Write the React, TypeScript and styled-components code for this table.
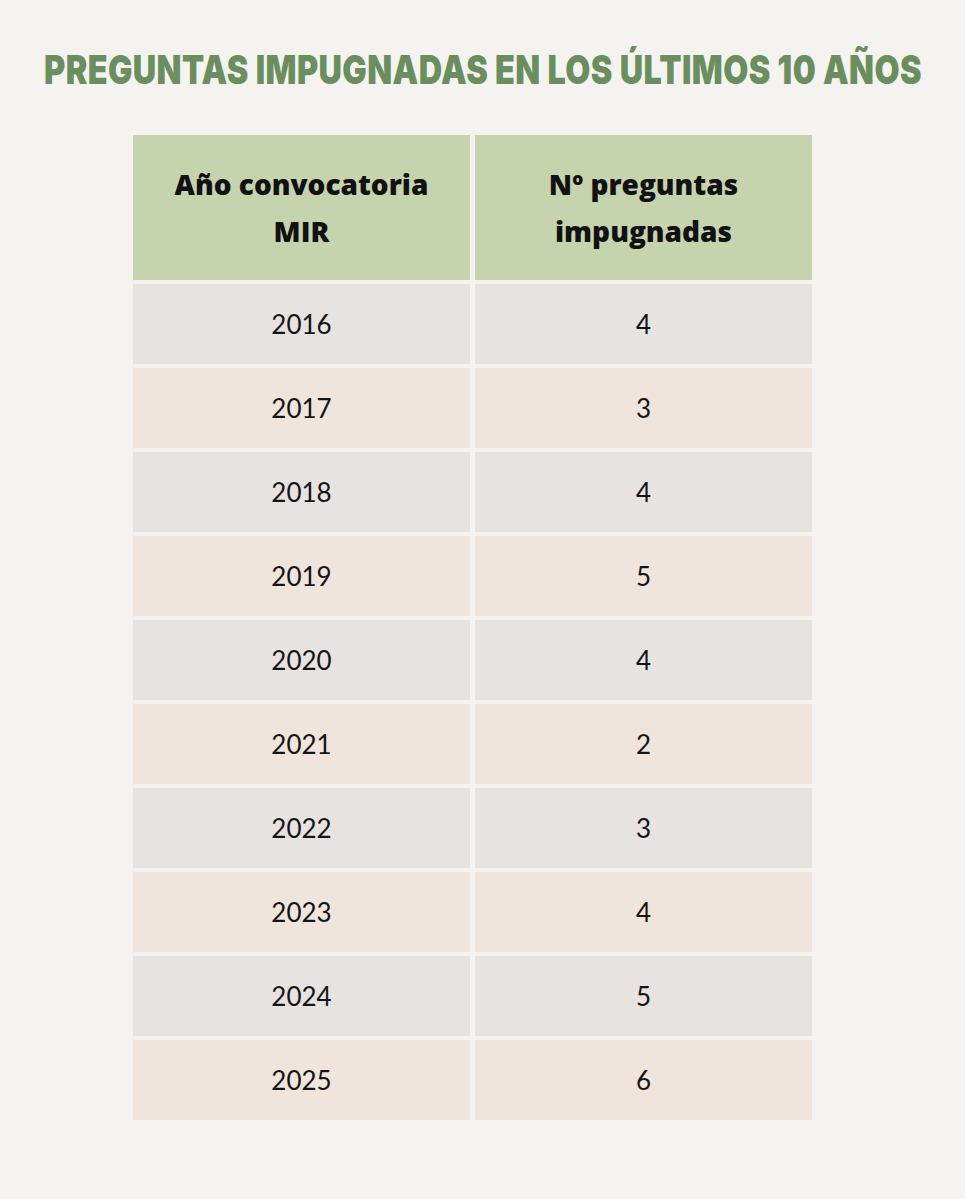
import React from "react";
import styled, { createGlobalStyle } from "styled-components";

const rows = [
  { year: "2016", count: 4 },
  { year: "2017", count: 3 },
  { year: "2018", count: 4 },
  { year: "2019", count: 5 },
  { year: "2020", count: 4 },
  { year: "2021", count: 2 },
  { year: "2022", count: 3 },
  { year: "2023", count: 4 },
  { year: "2024", count: 5 },
  { year: "2025", count: 6 },
];

const GlobalStyle = createGlobalStyle`
  html, body {
    margin: 0;
    padding: 0;
    background: #f4f3f0;
  }
`;

const App: React.FC = () => {
  return (
    <Page>
      <GlobalStyle />
      <Title>PREGUNTAS IMPUGNADAS EN LOS ÚLTIMOS 10 AÑOS</Title>
      <Table>
        <HeadCell>
          Año convocatoria
          <br />
          MIR
        </HeadCell>
        <HeadCell>
          Nº preguntas
          <br />
          impugnadas
        </HeadCell>
        {rows.map((r, i) => (
          <React.Fragment key={r.year}>
            <Cell $odd={i % 2 === 1}>{r.year}</Cell>
            <Cell $odd={i % 2 === 1}>{r.count}</Cell>
          </React.Fragment>
        ))}
      </Table>
    </Page>
  );
};

const Page = styled.div`
  width: 965px;
  height: 1199px;
  box-sizing: border-box;
  padding-top: 46px;
  display: flex;
  flex-direction: column;
  align-items: center;
  background: #f4f3f0;
  overflow: hidden;
`;

const Title = styled.h1`
  margin: 0 0 41px;
  font-family: Inter, "Liberation Sans", sans-serif;
  font-weight: 900;
  font-size: 40px;
  line-height: 48px;
  letter-spacing: 0.5px;
  color: #6b8e5e;
  white-space: nowrap;
  transform: scaleX(0.81);
`;

const Table = styled.div`
  display: grid;
  grid-template-columns: 337px 337px;
  grid-auto-rows: 80px;
  grid-template-rows: 145px;
  column-gap: 5px;
  row-gap: 4px;
  margin-left: -20px;
`;

const HeadCell = styled.div`
  background: #c5d4ad;
  display: flex;
  align-items: center;
  justify-content: center;
  text-align: center;
  font-family: "Open Sans", "Liberation Sans", sans-serif;
  font-weight: 800;
  font-size: 28px;
  line-height: 47px;
  color: #111;
`;

const Cell = styled.div<{ $odd: boolean }>`
  background: ${(p) => (p.$odd ? "#f0e5dc" : "#e7e3e0")};
  display: flex;
  align-items: center;
  justify-content: center;
  font-family: Lato, "Liberation Sans", sans-serif;
  font-weight: 400;
  font-size: 26px;
  color: #151515;
`;

export default App;
